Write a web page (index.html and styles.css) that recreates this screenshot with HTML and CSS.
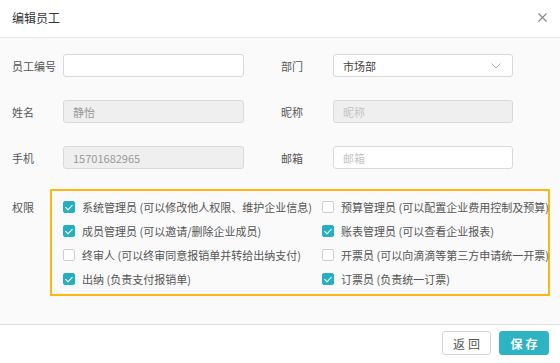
FILE: index.html
```html
<!DOCTYPE html>
<html lang="zh-CN">
<head>
    <meta charset="UTF-8">
    <meta name="viewport" content="width=device-width, initial-scale=1.0">
    <title>编辑员工</title>
    <link rel="stylesheet" href="styles.css">
</head>
<body>
    <div class="dialog">
        <div class="header">
            <span class="title">编辑员工</span>
            <span class="close">
                <svg width="9" height="9" viewBox="0 0 9 9"><path d="M0.5 0.5 L8.5 8.5 M8.5 0.5 L0.5 8.5" stroke="#888" stroke-width="1.1" fill="none"/></svg>
            </span>
        </div>
        <div class="body">
            <div class="row">
                <div class="field">
                    <label class="label">员工编号</label>
                    <div class="input"></div>
                </div>
                <div class="field right">
                    <label class="label">部门</label>
                    <div class="input select">
                        <span>市场部</span>
                        <svg width="10" height="6" viewBox="0 0 10 6"><path d="M0.5 0.5 L5 5 L9.5 0.5" stroke="#aaa" stroke-width="1" fill="none"/></svg>
                    </div>
                </div>
            </div>
            <div class="row">
                <div class="field">
                    <label class="label">姓名</label>
                    <div class="input disabled"><span class="muted">静怡</span></div>
                </div>
                <div class="field right">
                    <label class="label">昵称</label>
                    <div class="input disabled"><span class="placeholder">昵称</span></div>
                </div>
            </div>
            <div class="row">
                <div class="field">
                    <label class="label">手机</label>
                    <div class="input disabled"><span class="muted">15701682965</span></div>
                </div>
                <div class="field right">
                    <label class="label">邮箱</label>
                    <div class="input"><span class="placeholder">邮箱</span></div>
                </div>
            </div>
            <div class="perm-row">
                <label class="label perm-label">权限</label>
                <div class="perm-box">
                    <div class="perm"><span class="check on"></span>系统管理员 (可以修改他人权限、维护企业信息)</div>
                    <div class="perm"><span class="check"></span>预算管理员 (可以配置企业费用控制及预算)</div>
                    <div class="perm"><span class="check on"></span>成员管理员 (可以邀请/删除企业成员)</div>
                    <div class="perm"><span class="check on"></span>账表管理员 (可以查看企业报表)</div>
                    <div class="perm"><span class="check"></span>终审人 (可以终审同意报销单并转给出纳支付)</div>
                    <div class="perm"><span class="check"></span>开票员 (可以向滴滴等第三方申请统一开票)</div>
                    <div class="perm"><span class="check on"></span>出纳 (负责支付报销单)</div>
                    <div class="perm"><span class="check on"></span>订票员 (负责统一订票)</div>
                </div>
            </div>
        </div>
        <div class="footer">
            <button class="btn">返回</button>
            <button class="btn primary">保存</button>
        </div>
    </div>
</body>
</html>
```

FILE: styles.css
```css
* {
    margin: 0;
    padding: 0;
    box-sizing: border-box;
}
body {
    font-family: "Noto Sans CJK SC", "Liberation Sans", sans-serif;
    font-size: 11px;
    color: #555;
    background: #fff;
}
.dialog {
    width: 560px;
    height: 363px;
    display: flex;
    flex-direction: column;
}
.header {
    height: 38px;
    border-bottom: 1px solid #e6e6e6;
    display: flex;
    justify-content: space-between;
    align-items: center;
    padding: 0 13px 2px 12px;
}
.title {
    font-size: 12px;
    color: #333;
}
.close {
    display: flex;
}
.body {
    height: 287px;
    background: #fafafa;
    border-bottom: 1px solid #e2e2e2;
    padding-top: 16px;
}
.row {
    display: flex;
    margin-bottom: 23px;
}
.field {
    display: flex;
    align-items: center;
    width: 281px;
}
.field.right {
    width: auto;
}
.label {
    width: 63px;
    padding-left: 12px;
    color: #555;
}
.field.right .label {
    width: 52px;
    padding-left: 0;
}
.input {
    width: 181px;
    height: 23px;
    border: 1px solid #d9d9d9;
    border-radius: 3px;
    background: #fff;
    display: flex;
    align-items: center;
    padding: 0 9px;
    justify-content: space-between;
}
.field.right .input {
    width: 180px;
}
.input.disabled {
    background: #efefef;
}
.select span {
    color: #444;
}
.select svg {
    margin-right: 2px;
}
.muted {
    color: #999;
}
.placeholder {
    color: #c4c4c4;
}
.perm-row {
    display: flex;
    margin-top: -3px;
}
.perm-label {
    width: 50px;
    padding-top: 10px;
}
.perm-box {
    width: 500px;
    height: 107px;
    border: 2px solid #fbb812;
    padding: 4px 0 0 11px;
    display: grid;
    grid-template-columns: 259px auto;
    grid-auto-rows: 24px;
}
.perm {
    display: flex;
    align-items: center;
    white-space: nowrap;
    color: #555;
}
.check {
    flex-shrink: 0;
    width: 12px;
    height: 12px;
    border: 1px solid #cfcfcf;
    border-radius: 2px;
    background: #fff;
    margin-right: 7px;
    position: relative;
}
.check.on {
    background: #27aec0;
    border-color: #27aec0;
}
.check.on::after {
    content: "";
    position: absolute;
    left: 3px;
    top: 1px;
    width: 3px;
    height: 6px;
    border: solid #fff;
    border-width: 0 1.5px 1.5px 0;
    transform: rotate(45deg);
}
.footer {
    flex: 1;
    display: flex;
    justify-content: flex-end;
    align-items: center;
    gap: 8px;
    padding: 0 11px 2px 0;
}
.btn {
    width: 49px;
    height: 24px;
    border: 1px solid #d6d6d6;
    border-radius: 3px;
    background: #fff;
    color: #555;
    font-family: inherit;
    font-size: 12px;
    letter-spacing: 3px;
    text-indent: 3px;
}
.btn.primary {
    width: 50px;
    background: #2eb3c4;
    border-color: #2eb3c4;
    color: #fff;
    font-weight: bold;
}
```
